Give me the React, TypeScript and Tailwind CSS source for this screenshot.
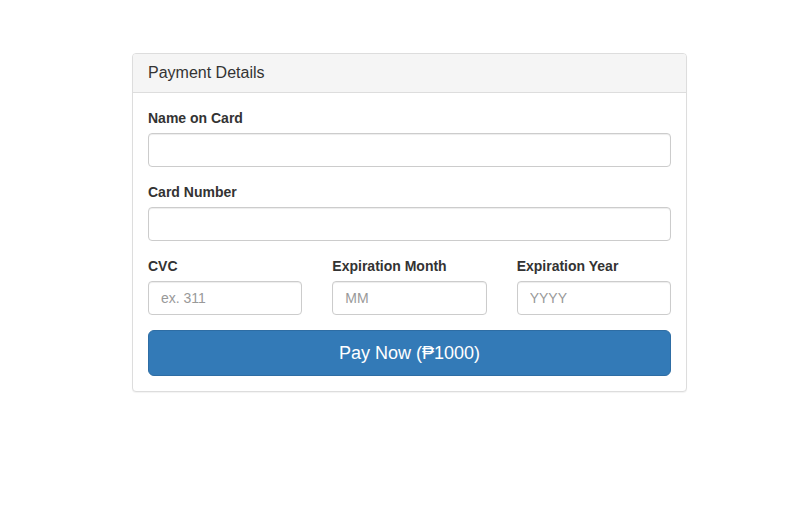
import React from "react";

function Field({ label, placeholder }: { label: string; placeholder?: string }) {
  return (
    <div className="mb-[15px] flex flex-col">
      <label className="mb-[5px] text-[14px] font-bold leading-[20px] text-[#333]">{label}</label>
      <input
        type="text"
        placeholder={placeholder}
        className="h-[34px] w-full rounded-[4px] border border-[#ccc] bg-white px-[12px] py-[6px] text-[14px] leading-[20px] text-[#555] shadow-[inset_0_1px_1px_rgba(0,0,0,0.075)] outline-none placeholder:text-[#999]"
      />
    </div>
  );
}

export default function App() {
  return (
    <div
      className="min-h-[505px] w-[793px] bg-white pt-[53px]"
      style={{ fontFamily: '"Liberation Sans", Arial, Helvetica, sans-serif' }}
    >
      <div className="ml-[132px] w-[555px] rounded-[4px] border border-[#ddd] bg-white shadow-[0_1px_1px_rgba(0,0,0,0.05)]">
        <div className="rounded-t-[3px] border-b border-[#ddd] bg-[#f5f5f5] px-[15px] py-[10px] text-[16px] leading-[18px] text-[#333]">
          Payment Details
        </div>
        <div className="px-[15px] pt-[15px] pb-[15px]">
          <Field label="Name on Card" />
          <Field label="Card Number" />
          <div className="grid grid-cols-3 gap-[30px]">
            <Field label="CVC" placeholder="ex. 311" />
            <Field label="Expiration Month" placeholder="MM" />
            <Field label="Expiration Year" placeholder="YYYY" />
          </div>
          <button className="block h-[46px] w-full rounded-[6px] border border-[#2e6da4] bg-[#337ab7] px-[16px] py-[10px] text-[18px] leading-[24px] text-white">
            Pay Now (₱1000)
          </button>
        </div>
      </div>
    </div>
  );
}
